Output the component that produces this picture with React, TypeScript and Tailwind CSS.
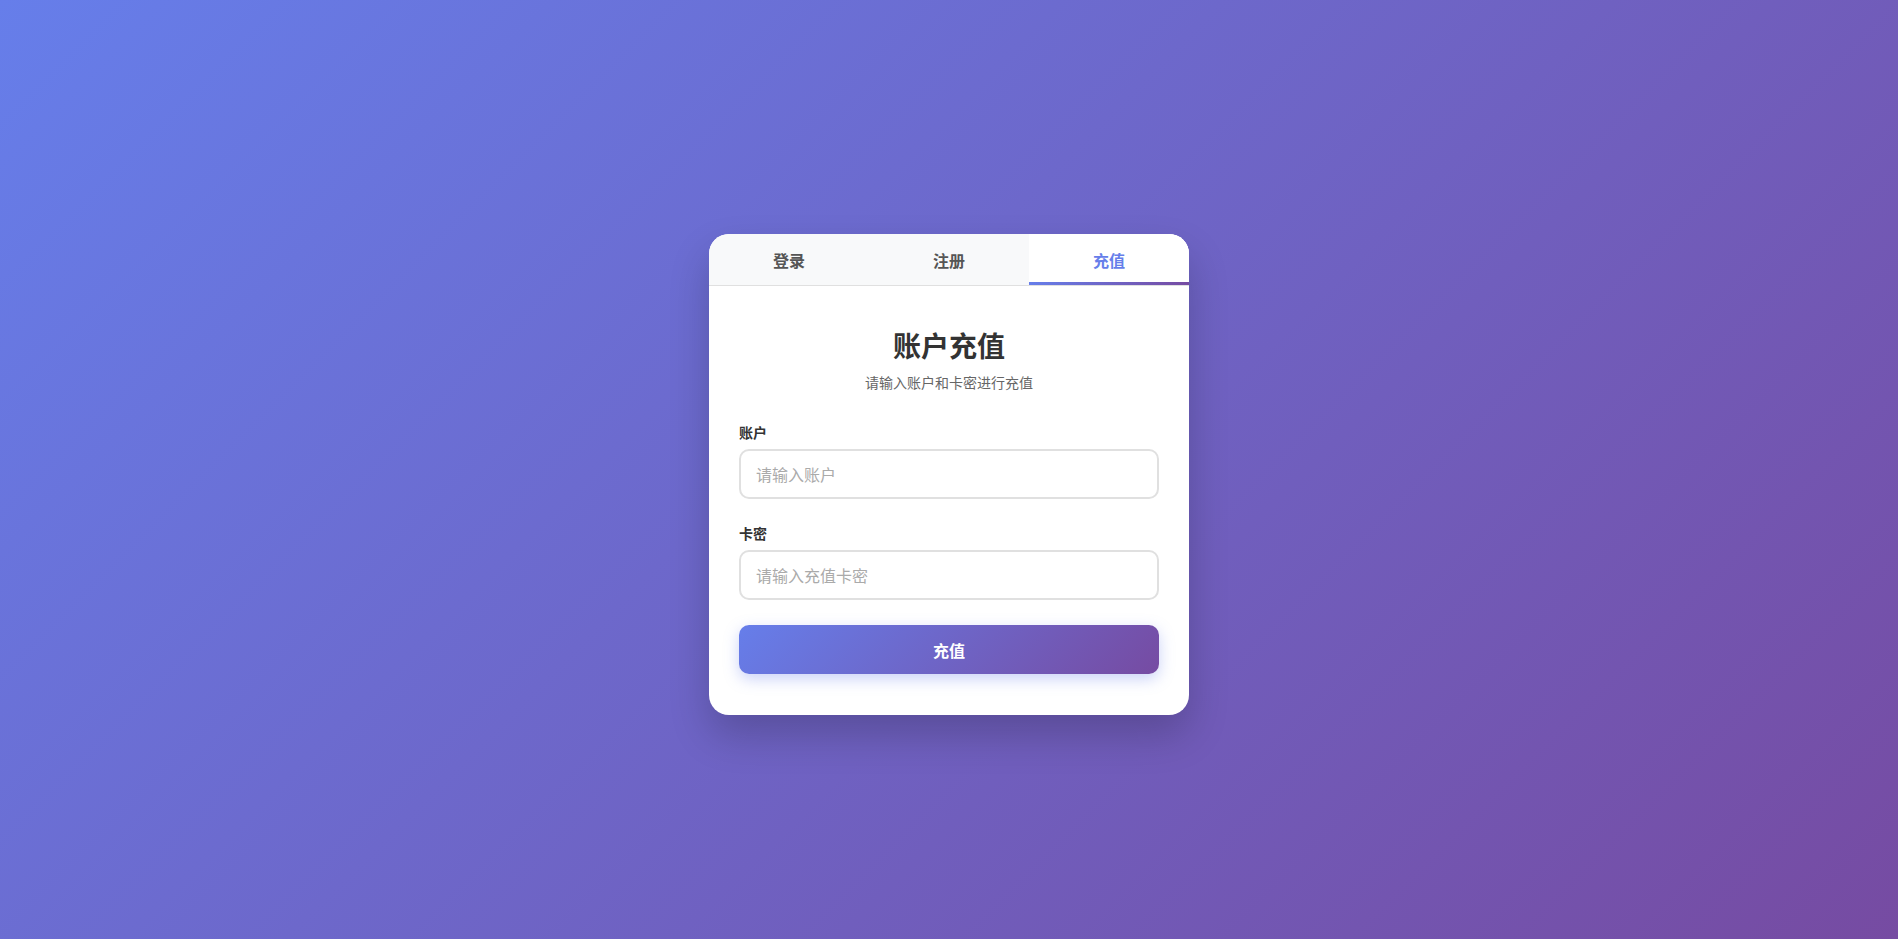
import React from "react";

export default function App() {
  const font = { fontFamily: '"Noto Sans CJK SC", "Noto Sans", sans-serif' };
  return (
    <div
      className="min-h-screen w-full flex items-center justify-center pt-[10px] bg-[linear-gradient(135deg,#667eea_0%,#764ba2_100%)]"
      style={font}
    >
      <div className="w-[480px] bg-white rounded-[20px] overflow-hidden shadow-[0_20px_40px_rgba(0,0,0,0.2)]">
        <div className="flex h-[52px] bg-[#f8f9fa] border-b border-[#e0e0e0]">
          <button className="flex-1 flex items-center justify-center text-[16px] font-semibold text-[#555]">登录</button>
          <button className="flex-1 flex items-center justify-center text-[16px] font-semibold text-[#555]">注册</button>
          <button className="relative flex-1 flex items-center justify-center text-[16px] font-semibold text-[#667eea] bg-white">
            充值
            <span className="absolute left-0 right-0 bottom-0 h-[3px] bg-[linear-gradient(90deg,#667eea,#764ba2)]" />
          </button>
        </div>
        <div className="px-[30px] pt-[42px] pb-[41px]">
          <div className="text-center mb-[30px]">
            <h2 className="text-[28px] leading-[34px] font-bold text-[#333] mb-[10px]">账户充值</h2>
            <p className="text-[14px] leading-[20px] text-[#666]">请输入账户和卡密进行充值</p>
          </div>
          <div className="mb-[24px]">
            <label className="block text-[14px] leading-[20px] font-semibold text-[#333] mb-[7px]">账户</label>
            <input
              className="w-full h-[50px] px-[15px] border-2 border-[#e0e0e0] rounded-[10px] text-[16px] outline-none placeholder:text-[#aaa]"
              placeholder="请输入账户"
            />
          </div>
          <div className="mb-[25px]">
            <label className="block text-[14px] leading-[20px] font-semibold text-[#333] mb-[7px]">卡密</label>
            <input
              className="w-full h-[50px] px-[15px] border-2 border-[#e0e0e0] rounded-[10px] text-[16px] outline-none placeholder:text-[#aaa]"
              placeholder="请输入充值卡密"
            />
          </div>
          <button className="w-full h-[49px] rounded-[10px] text-white text-[16px] font-semibold bg-[linear-gradient(135deg,#667eea_0%,#764ba2_100%)] shadow-[0_5px_15px_rgba(102,126,234,0.35)]">
            充值
          </button>
        </div>
      </div>
    </div>
  );
}
